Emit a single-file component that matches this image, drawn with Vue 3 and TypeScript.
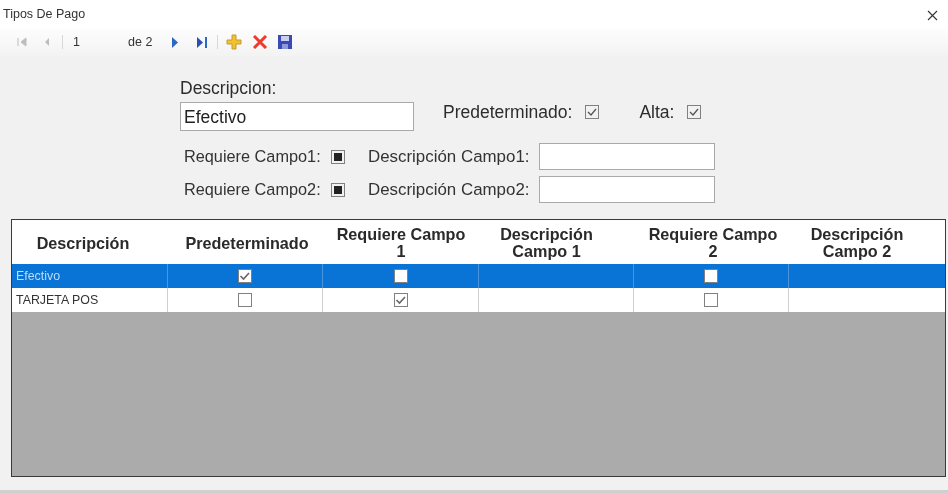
<script setup lang="ts">
interface Row {
  name: string
  def: boolean
  c1: boolean
  c2: boolean
  selected: boolean
}
interface Col {
  lines: string[]
  cls: string
}
const columns: Col[] = [
  { lines: ['Descripción'], cls: 'single shift-a' },
  { lines: ['Predeterminado'], cls: 'single shift-r' },
  { lines: ['Requiere Campo', '1'], cls: '' },
  { lines: ['Descripción', 'Campo 1'], cls: 'shift-b' },
  { lines: ['Requiere Campo', '2'], cls: 'shift-r' },
  { lines: ['Descripción', 'Campo 2'], cls: 'shift-b' },
]
const rows: Row[] = [
  { name: 'Efectivo', def: true, c1: false, c2: false, selected: true },
  { name: 'TARJETA POS', def: false, c1: true, c2: false, selected: false },
]
</script>

<template>
  <div class="window">
    <header class="title">
      <span>Tipos De Pago</span>
      <svg class="close" width="11" height="11" viewBox="0 0 11 11"><path d="M1 1l9 9M10 1l-9 9" stroke="#333" stroke-width="1.1" fill="none" /></svg>
    </header>

    <nav class="toolbar">
      <svg class="ic first" width="12" height="12" viewBox="0 0 12 12"><path d="M2 2v8M10 2v8L5 6z" fill="#bdbdbd" stroke="#bdbdbd" /></svg>
      <svg class="ic prev" width="8" height="12" viewBox="0 0 8 12"><path d="M6 2v8L2 6z" fill="#bdbdbd" /></svg>
      <i class="sep"></i>
      <span class="pos">1</span>
      <span class="total">de 2</span>
      <svg class="ic next" width="8" height="13" viewBox="0 0 8 13"><path d="M1 1v11l6-5.500z" fill="#2b67c9" /></svg>
      <svg class="ic last" width="12" height="13" viewBox="0 0 12 13"><path d="M1 1v11l6-5.500z" fill="#2b4fb0" /><path d="M9 1h2v11H9z" fill="#2b67c9" /></svg>
      <i class="sep sep2"></i>
      <svg class="ic add" width="16" height="16" viewBox="0 0 16 16"><path d="M6 1h4v5h5v4h-5v5H6v-5H1V6h5z" fill="#f0c22e" stroke="#c99a2e" /></svg>
      <svg class="ic del" width="16" height="14" viewBox="0 0 16 14"><path d="M2 1l12 12M14 1L2 13" stroke="#ef3b2d" stroke-width="3" fill="none" /></svg>
      <svg class="ic save" width="16" height="16" viewBox="0 0 16 16"><path d="M1 1h14v14H1z" fill="#3a49b5" /><path d="M4 2h8v5H4z" fill="#c9cff0" /><path d="M5 10h6v5H5z" fill="#8f98d8" /></svg>
    </nav>

    <section class="form">
      <div class="line-one">
        <div class="desc">
          <label class="big">Descripcion:</label>
          <div class="input wide">Efectivo</div>
        </div>
        <label class="big pre">Predeterminado:</label>
        <span class="check form-check"><svg width="14" height="14" viewBox="0 0 14 14"><path d="M3 7l3 3 5-6" stroke="#555" stroke-width="1.3" fill="none" /></svg></span>
        <label class="big alta">Alta:</label>
        <span class="check form-check"><svg width="14" height="14" viewBox="0 0 14 14"><path d="M3 7l3 3 5-6" stroke="#555" stroke-width="1.3" fill="none" /></svg></span>
      </div>
      <div v-for="n in 2" :key="n" class="line-field">
        <label class="req">Requiere Campo{{ n }}:</label>
        <span class="check tri"><i></i></span>
        <label class="dsc">Descripción Campo{{ n }}:</label>
        <div class="input small"></div>
      </div>
    </section>

    <section class="grid">
      <div class="head">
        <div v-for="(col, i) in columns" :key="i" class="hcell" :class="col.cls">
          <span v-for="t in col.lines" :key="t">{{ t }}</span>
        </div>
      </div>
      <div v-for="r in rows" :key="r.name" class="row" :class="{ selected: r.selected }">
        <div class="cell name">{{ r.name }}</div>
        <div class="cell"><span class="check" :class="{ on: r.def }"><svg v-if="r.def" width="14" height="14" viewBox="0 0 14 14"><path d="M2.500 7l3 3 5.500-6" stroke="#666" stroke-width="1.6" fill="none" /></svg></span></div>
        <div class="cell"><span class="check" :class="{ on: r.c1 }"><svg v-if="r.c1" width="14" height="14" viewBox="0 0 14 14"><path d="M2.500 7l3 3 5.500-6" stroke="#666" stroke-width="1.6" fill="none" /></svg></span></div>
        <div class="cell"></div>
        <div class="cell"><span class="check" :class="{ on: r.c2 }"></span></div>
        <div class="cell"></div>
      </div>
      <div class="empty"></div>
    </section>
    <div class="foot"></div>
  </div>
</template>

<style>
html, body { margin: 0; background: #f0f0f0; }
</style>

<style scoped>
.window {
  width: 948px;
  height: 493px;
  overflow: hidden;
  display: flex;
  flex-direction: column;
  background: #f1f1f1;
  font-family: "Liberation Sans", Arial, sans-serif;
  color: #222;
  filter: blur(0.6px);
}
.title {
  height: 28px;
  flex: none;
  display: flex;
  align-items: center;
  justify-content: space-between;
  padding: 0 10px 0 3px;
  background: #fff;
  font-size: 12.500px;
  color: #333;
}
.close { margin-top: 2px; }
.toolbar {
  height: 28px;
  flex: none;
  display: flex;
  align-items: center;
  padding-left: 16px;
  background: linear-gradient(#fdfdfd, #f3f3f3);
  font-size: 12.500px;
  color: #333;
}
.ic { flex: none; }
.prev { margin-left: 15px; }
.sep { width: 1px; height: 14px; background: #d8d8d8; margin-left: 11px; }
.pos { width: 55px; margin-left: 10px; }
.total { width: 43px; }
.last { margin-left: 17px; }
.sep2 { margin-left: 9px; }
.add { margin-left: 8px; }
.del { margin-left: 10px; }
.save { margin-left: 9px; }

.form {
  flex: none;
  height: 163px;
  padding-left: 180px;
  box-sizing: border-box;
}
.big { font-size: 17.500px; line-height: 20px; color: #2c2c2c; }
.line-one {
  height: 84px;
  padding-top: 22px;
  box-sizing: border-box;
  display: flex;
  align-items: flex-start;
}
.desc { display: flex; flex-direction: column; gap: 4px; width: 234px; }
.input {
  background: #fff;
  border: 1px solid #a9a9a9;
  box-sizing: border-box;
}
.wide {
  height: 29px;
  padding-left: 3px;
  font-size: 17.500px;
  line-height: 28px;
  color: #222;
}
.pre { margin-left: 29px; margin-top: 24px; }
.alta { margin-left: 40px; margin-top: 24px; }
.form-check {
  margin-top: 27px;
  margin-left: 13px;
  background: transparent;
}
.line-field {
  height: 33px;
  padding-left: 4px;
  display: flex;
  align-items: center;
  color: #333;
  white-space: nowrap;
}
.req { width: 137px; font-size: 16.300px; }
.tri { margin-left: 10px; background: transparent; }
.tri i { width: 8px; height: 8px; background: #222; }
.dsc { margin-left: 23px; width: 171px; font-size: 16.900px; }
.small { width: 176px; height: 27px; }
.check {
  width: 14px;
  height: 14px;
  flex: none;
  box-sizing: border-box;
  border: 1px solid #808080;
  background: #fff;
  display: inline-flex;
  align-items: center;
  justify-content: center;
  overflow: hidden;
}
.check svg { flex: none; }
.form-check, .tri { background: transparent; }

.grid {
  flex: none;
  margin-left: 11px;
  width: 935px;
  height: 258px;
  box-sizing: border-box;
  border: 1.500px solid #3a3a3a;
  background: #ababab;
  display: flex;
  flex-direction: column;
}
.head, .row {
  display: grid;
  grid-template-columns: 156px 155px 156px 155px 155px 1fr;
}
.head { height: 44px; background: #fff; flex: none; }
.hcell {
  display: flex;
  flex-direction: column;
  align-items: center;
  padding-top: 6px;
  font-size: 16.200px;
  line-height: 17px;
  font-weight: 700;
  color: #2a2a2a;
  white-space: nowrap;
}
.hcell.single { justify-content: center; padding-top: 2px; }
.shift-a { padding-right: 14px; }
.shift-b { padding-right: 20px; }
.shift-r { padding-left: 3px; }
.row { height: 24px; background: #fff; color: #333; flex: none; }
.row.selected { background: #0a74d6; color: #bcdcf8; }
.cell {
  border-right: 1px solid #d0d0d0;
  display: flex;
  align-items: center;
  justify-content: center;
  font-size: 12.400px;
}
.cell:last-child { border-right: none; }
.selected .cell { border-right-color: #4a97e0; }
.name { justify-content: flex-start; padding-left: 4px; }
.empty { flex: 1; }
.foot { margin-top: auto; height: 3px; flex: none; background: #cfcfcf; }
</style>
